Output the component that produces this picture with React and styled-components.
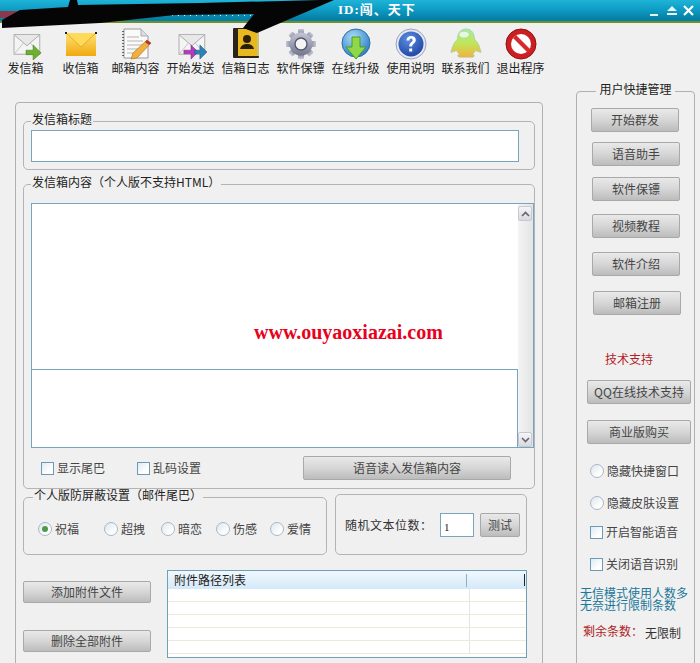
import React from "react";
import styled, { createGlobalStyle } from "styled-components";

const Global = createGlobalStyle`
  html, body { margin: 0; padding: 0; background: #f0f0f0; }
  * { box-sizing: border-box; }
`;

const Page = styled.div`
  position: relative;
  width: 700px;
  height: 663px;
  overflow: hidden;
  background: #f0f0f0;
  color: #333;
  font: 12px/14px "Noto Sans CJK SC", "Liberation Sans", sans-serif;
`;

const TitleBar = styled.header`
  position: relative;
  height: 23px;
  padding-right: 5px;
  display: flex;
  align-items: center;
  justify-content: flex-end;
  background: linear-gradient(#1fb4d8 0%, #0e9cc4 45%, #067fa6 90%);
  border-bottom: 2px solid #6f8f2a;
`;

const TitleText = styled.div`
  position: absolute;
  left: 338px;
  top: 2px;
  color: #fff;
  font: bold 13px/16px "Liberation Serif", "Noto Sans CJK SC", serif;
  letter-spacing: 1px;
`;

const Scribble = styled.svg`
  position: absolute;
  left: 0;
  top: 0;
  pointer-events: none;
`;

const Toolbar = styled.nav`
  display: flex;
  height: 59px;
  margin-left: -2px;
  padding-top: 5px;
`;

const ToolItem = styled.div`
  width: 55px;
  display: flex;
  flex-direction: column;
  align-items: center;
  color: #222;
  svg { display: block; }
`;

const ToolLabel = styled.span`
  margin-top: 1px;
  white-space: nowrap;
`;

const Body = styled.main`
  display: flex;
  align-items: flex-start;
  padding-left: 15px;
`;

const LeftPanel = styled.section`
  width: 528px;
  height: 600px;
  margin-top: 20px;
  padding: 9px 7px 0;
  border: 1px solid #b0b0b0;
  border-radius: 4px;
  flex-shrink: 0;
`;

const Group = styled.fieldset`
  margin: ${(p) => p.$top || 0}px 0 0;
  min-width: 0;
  width: ${(p) => (p.$width ? `${p.$width}px` : "auto")};
  height: ${(p) => (p.$height ? `${p.$height}px` : "auto")};
  padding: ${(p) => p.$pad || "0 15px 7px 7px"};
  border: 1px solid #b4b4b4;
  border-radius: 5px;
`;

const Legend = styled.legend`
  padding: 0 ${(p) => p.$side || 1}px 4px;
  margin-left: ${(p) => (p.$center ? "auto" : `${p.$left || 0}px`)};
  margin-right: ${(p) => (p.$center ? "auto" : "0")};
  color: #222;
  white-space: nowrap;
`;

const FieldBox = styled.div`
  height: 32px;
  background: #fff;
  border: 1px solid #78a5bd;
`;

const Editor = styled.div`
  display: flex;
  height: 245px;
  margin-top: 10px;
  background: #fff;
  border: 1px solid #78a5bd;
`;

const EditorColumn = styled.div`
  flex: 1;
  display: flex;
  flex-direction: column;
  justify-content: flex-end;
`;

const EditorFooter = styled.div`
  height: 79px;
  margin-left: -1px;
  margin-bottom: -1px;
  border: 1px solid #78a5bd;
`;

const Scrollbar = styled.div`
  width: 15px;
  display: flex;
  flex-direction: column;
  justify-content: space-between;
  padding: 2px 1px 0 0;
  background: linear-gradient(90deg, #f4f4f4, #e4e4e4);
`;

const ScrollArrow = styled.div`
  height: 15px;
  display: flex;
  align-items: center;
  justify-content: center;
  border: 1px solid #c8c8d0;
  border-radius: 2px;
  background: linear-gradient(#f6f6f8, #d8d8e0);
  color: #555;
`;

const OptionRow = styled.div`
  display: flex;
  align-items: center;
  height: 40px;
  padding: 0 23px 0 10px;
`;

const CheckItem = styled.label`
  display: flex;
  align-items: center;
  gap: 3px;
  width: ${(p) => (p.$width ? `${p.$width}px` : "auto")};
  margin-top: ${(p) => p.$top || 0}px;
  margin-left: ${(p) => p.$left || 0}px;
  color: #444;
  white-space: nowrap;
`;

const CheckBox = styled.span`
  width: 13px;
  height: 13px;
  flex-shrink: 0;
  border: 1px solid #6f9ab5;
  background: linear-gradient(135deg, #dcebf3, #fff 70%);
`;

const Radio = styled.span`
  position: relative;
  width: 14px;
  height: 14px;
  flex-shrink: 0;
  border: 1px solid #a8b8c4;
  border-radius: 50%;
  background: linear-gradient(135deg, #dde6ec, #fff 75%);
  ${(p) =>
    p.$checked &&
    `&::after {
      content: "";
      position: absolute;
      left: 3px;
      top: 3px;
      width: 6px;
      height: 6px;
      border-radius: 50%;
      background: #4f9a4a;
    }`}
`;

const SkinButton = styled.button`
  display: flex;
  align-items: center;
  justify-content: center;
  width: ${(p) => p.$width}px;
  height: ${(p) => p.$height || 24}px;
  margin: ${(p) => p.$top || 0}px 0 0 ${(p) => p.$left || 0}px;
  padding: 0;
  flex-shrink: 0;
  border: 1px solid #a9a9a9;
  border-radius: 2px;
  background: linear-gradient(#e9e9e9 0%, #d6d6d6 50%, #bcbcbc 100%);
  color: #444;
  font: inherit;
  white-space: nowrap;
`;

const SettingsRow = styled.div`
  display: flex;
  align-items: flex-start;
  gap: 8px;
  margin-top: -1px;
`;

const RadioRow = styled.div`
  display: flex;
  align-items: center;
  margin-top: 16px;
`;

const NumberRow = styled.div`
  display: flex;
  align-items: center;
  height: 100%;
  padding-left: 9px;
`;

const NumberLabel = styled.span`
  width: 95px;
  color: #333;
  letter-spacing: 0.5px;
  white-space: nowrap;
`;

const NumberField = styled.div`
  width: 34px;
  height: 24px;
  margin-right: 6px;
  padding: 6px 0 0 3px;
  background: #fff;
  border: 1px solid #78a5bd;
  color: #222;
  font: 11px/14px "Liberation Serif", serif;
`;

const AttachRow = styled.div`
  display: flex;
  margin-top: 15px;
`;

const AttachActions = styled.div`
  width: 144px;
  padding-top: 11px;
`;

const AttachList = styled.div`
  width: 360px;
  height: 88px;
  background: #fff;
  border: 1px solid #6f9fb5;
`;

const ListHeader = styled.div`
  position: relative;
  display: flex;
  align-items: center;
  height: 18px;
  padding-left: 6px;
  color: #222;
  background: linear-gradient(#f0f8fd, #d4e9f8);
`;

const ListMark = styled.span`
  position: absolute;
  right: ${(p) => p.$right}px;
  top: ${(p) => p.$top}px;
  width: 1px;
  height: ${(p) => p.$h}px;
  background: ${(p) => p.$color};
`;

const ListRow = styled.div`
  display: flex;
  height: 13px;
  border-bottom: 1px solid #ecead8;
  &:first-of-type { height: 14px; }
`;

const ListCell = styled.div`
  width: 302px;
  border-right: 1px solid #e6e6e0;
`;

const RightPanel = styled.fieldset`
  width: 119px;
  height: 620px;
  margin: 0 0 0 33px;
  padding: 8px 0 0 0;
  min-width: 0;
  flex-shrink: 0;
  display: flex;
  flex-direction: column;
  border: 1px solid #b0b0b0;
  border-radius: 4px;
`;

const SupportTitle = styled.div`
  margin: 37px 0 0 28px;
  color: #b01c24;
`;

const NoticeText = styled.div`
  margin: 16px 0 0 3px;
  color: #1a7799;
  line-height: 12px;
  white-space: nowrap;
`;

const QuotaRow = styled.div`
  display: flex;
  margin: 13px 0 0 6px;
`;

const QuotaLabel = styled.span`
  width: 62px;
  color: #b01c24;
`;

const QuotaValue = styled.span`
  margin-top: 2px;
  color: #333;
`;

const Watermark = styled.div`
  position: absolute;
  left: 254px;
  top: 320px;
  color: #e8001c;
  font: bold 20px/24px "Liberation Serif", serif;
`;

const Envelope = ({ color = "#e8e8e8" }) => (
  <g>
    <rect x="4.5" y="7.5" width="29" height="22" fill="#f4f4f4" stroke="#a5a5a5" />
    <path d="M5 8l14 12L33 8" fill={color} stroke="#a5a5a5" />
    <path d="M5 29l10-12M33 29L23 17" fill="none" stroke="#c0c0c0" />
  </g>
);

const SendMailIcon = () => (
  <svg width="32" height="32" viewBox="0 0 36 36">
    <Envelope />
    <path d="M18 25h8v-6l9 9-9 8v-6h-8z" fill="#6fae2e" stroke="#3f7d1a" strokeWidth=".6" />
  </svg>
);

const InboxIcon = () => (
  <svg width="32" height="32" viewBox="0 0 32 32">
    <defs>
      <linearGradient id="inboxFill" x1="0" y1="0" x2="0" y2="1">
        <stop offset="0" stopColor="#ffe27a" />
        <stop offset="1" stopColor="#f0a90e" />
      </linearGradient>
    </defs>
    <rect x="1" y="5" width="30" height="23" fill="url(#inboxFill)" />
    <path d="M1 5l15 14L31 5" fill="#ffd95a" stroke="#e9ac22" />
    <path d="M0 4h2v2H0zM30 4h2v2h-2z" fill="#222" />
  </svg>
);

const NotepadIcon = () => (
  <svg width="32" height="32" viewBox="0 0 32 32">
    <path d="M4 1h17l7 7v22H4z" fill="#fafafa" stroke="#9a9a9a" />
    <path d="M21 1v7h7" fill="#ddd" stroke="#aaa" />
    <path d="M7 9h12M7 13h16M7 17h16M7 21h12M7 25h8" stroke="#b5b5b5" />
    <path d="M3 3v26" stroke="#444" strokeWidth="1.6" strokeDasharray="1 2" />
    <path d="M27 12l4 3-14 15-6 1 2-6z" fill="#f0b040" stroke="#b06a10" strokeWidth=".6" />
    <path d="M27 12l4 3-2 2-4-3z" fill="#b0303a" />
  </svg>
);

const SendAllIcon = () => (
  <svg width="32" height="32" viewBox="0 0 36 36">
    <Envelope />
    <path d="M10 25h8v-6l8 8-8 8v-6h-8z" fill="#b43cbc" stroke="#7d1f86" strokeWidth=".6" />
    <path d="M22 25h6v-6l8 8-8 8v-6h-6z" fill="#2d83b8" stroke="#145a85" strokeWidth=".6" />
  </svg>
);

const AddressBookIcon = () => (
  <svg width="32" height="32" viewBox="0 0 32 32">
    <rect x="3" y="0" width="26" height="30" rx="1" fill="#2b2418" />
    <rect x="8" y="1" width="19" height="27" fill="#e8b81e" />
    <rect x="27" y="2" width="2" height="26" fill="#c9c27a" />
    <circle cx="17" cy="11" r="4" fill="#2a2008" />
    <path d="M10 21c1-4 4-5 7-5s6 1 7 5z" fill="#2a2008" />
  </svg>
);

const GearIcon = () => {
  const teeth = [0, 45, 90, 135, 180, 225, 270, 315];
  return (
    <svg width="32" height="32" viewBox="0 0 32 32">
      <defs>
        <linearGradient id="gearFill" x1="0" y1="0" x2="0" y2="1">
          <stop offset="0" stopColor="#c4c6d6" />
          <stop offset="1" stopColor="#74768e" />
        </linearGradient>
      </defs>
      {teeth.map((deg) => (
        <rect key={deg} x="13" y="1" width="6" height="7" rx="1" fill="url(#gearFill)" transform={`rotate(${deg} 16 16)`} />
      ))}
      <circle cx="16" cy="16" r="11.5" fill="url(#gearFill)" />
      <circle cx="16" cy="16" r="6" fill="#f4f4f4" stroke="#56586e" strokeWidth="1.4" />
    </svg>
  );
};

const UpdateIcon = () => (
  <svg width="32" height="32" viewBox="0 0 32 32">
    <defs>
      <radialGradient id="globeFill" cx=".4" cy=".3" r=".8">
        <stop offset="0" stopColor="#a9dcf7" />
        <stop offset="1" stopColor="#1e72c4" />
      </radialGradient>
    </defs>
    <circle cx="16" cy="15" r="14" fill="url(#globeFill)" stroke="#2d6fa8" />
    <path d="M12 9h8v10h6L16 31 6 19h6z" fill="#8ed84a" stroke="#4f9a20" />
  </svg>
);

const HelpIcon = () => (
  <svg width="32" height="32" viewBox="0 0 32 32">
    <defs>
      <radialGradient id="helpFill" cx=".4" cy=".3" r=".8">
        <stop offset="0" stopColor="#5b8fe0" />
        <stop offset="1" stopColor="#1a3fa0" />
      </radialGradient>
    </defs>
    <circle cx="16" cy="16" r="15" fill="#e6e8f2" stroke="#9aa2bc" />
    <circle cx="16" cy="16" r="12.5" fill="url(#helpFill)" />
    <path d="M11.5 12.5c0-3 2-4.5 4.7-4.5s4.6 1.5 4.6 4c0 3.5-3.6 3.4-3.6 6.5h-3c0-4.3 3.4-4.2 3.4-6.3 0-1-.7-1.6-1.6-1.6-1.1 0-1.6.8-1.6 1.9z" fill="#fff" />
    <rect x="14.2" y="20.5" width="3" height="3" fill="#fff" />
  </svg>
);

const QQIcon = () => (
  <svg width="32" height="32" viewBox="0 0 34 34">
    <defs>
      <linearGradient id="qqFill" x1="0" y1="0" x2="0" y2="1">
        <stop offset="0" stopColor="#a6e8a8" />
        <stop offset=".5" stopColor="#bfe65a" />
        <stop offset="1" stopColor="#f4b23e" />
      </linearGradient>
    </defs>
    <path d="M17 1c6 0 9 5 9 10 0 2 3 3 5 8 1 3 2 6 2 7l-6-2c-1 2-2 3-3 4 2 1 3 2 0 3H10c-3-1-2-2 0-3-1-1-2-2-3-4l-6 2c0-1 1-4 2-7 2-5 5-6 5-8C8 6 11 1 17 1z" fill="url(#qqFill)" stroke="#9bc49a" strokeWidth=".6" />
    <ellipse cx="15" cy="7" rx="5" ry="3" fill="#e4f8e4" />
  </svg>
);

const ExitIcon = () => (
  <svg width="32" height="32" viewBox="0 0 32 32">
    <circle cx="16" cy="16" r="15" fill="#cc1f22" stroke="#8e1215" />
    <circle cx="16" cy="16" r="10" fill="#fff" />
    <path d="M8 10l3-3 15 15-3 3z" fill="#d62a2c" />
  </svg>
);

const tools = [
  ["发信箱", SendMailIcon],
  ["收信箱", InboxIcon],
  ["邮箱内容", NotepadIcon],
  ["开始发送", SendAllIcon],
  ["信箱日志", AddressBookIcon],
  ["软件保镖", GearIcon],
  ["在线升级", UpdateIcon],
  ["使用说明", HelpIcon],
  ["联系我们", QQIcon],
  ["退出程序", ExitIcon],
];

const tailOptions = [
  ["祝福", 66, true],
  ["超拽", 57],
  ["暗恋", 55],
  ["伤感", 54],
  ["爱情", 50],
];

const WindowControls = () => (
  <svg width="46" height="14" viewBox="0 0 46 14">
    <path d="M1 11h8" stroke="#dff3f8" strokeWidth="2" />
    <path d="M18 7l5-5 5 5zM18 9h10v2H18z" fill="#e8f6fa" />
    <path d="M35 2l9 9M44 2l-9 9" stroke="#fff" strokeWidth="2.2" />
  </svg>
);

const Chevron = ({ up }) => (
  <svg width="9" height="6" viewBox="0 0 9 6">
    <path d={up ? "M1 5l3.5-3.5L8 5" : "M1 1l3.5 3.5L8 1"} fill="none" stroke="#666" strokeWidth="1.6" />
  </svg>
);

export default function App() {
  return (
    <Page>
      <Global />
      <TitleBar>
        <TitleText>ID:闯、天下</TitleText>
        <WindowControls />
      </TitleBar>
      <Toolbar>
        {tools.map(([label, Icon]) => (
          <ToolItem key={label}>
            <Icon />
            <ToolLabel>{label}</ToolLabel>
          </ToolItem>
        ))}
      </Toolbar>
      <Body>
        <LeftPanel>
          <Group>
            <Legend>发信箱标题</Legend>
            <FieldBox />
          </Group>
          <Group $top={5} $pad="0 0 0 7px">
            <Legend>发信箱内容（个人版不支持HTML）</Legend>
            <Editor>
              <EditorColumn>
                <EditorFooter />
              </EditorColumn>
              <Scrollbar>
                <ScrollArrow><Chevron up /></ScrollArrow>
                <ScrollArrow><Chevron /></ScrollArrow>
              </Scrollbar>
            </Editor>
            <OptionRow>
              <CheckItem $width={96}><CheckBox />显示尾巴</CheckItem>
              <CheckItem $width={166}><CheckBox />乱码设置</CheckItem>
              <SkinButton $width={208}>语音读入发信箱内容</SkinButton>
            </OptionRow>
          </Group>
          <SettingsRow>
            <Group $width={304} $height={67} $pad="0 0 0 14px">
              <Legend $left={-5}>个人版防屏蔽设置（邮件尾巴）</Legend>
              <RadioRow>
                {tailOptions.map(([label, width, checked]) => (
                  <CheckItem key={label} $width={width}>
                    <Radio $checked={checked} />
                    {label}
                  </CheckItem>
                ))}
              </RadioRow>
            </Group>
            <Group as="div" $width={192} $height={61} $top={6} $pad="0">
              <NumberRow>
                <NumberLabel>随机文本位数：</NumberLabel>
                <NumberField>1</NumberField>
                <SkinButton $width={40}>测试</SkinButton>
              </NumberRow>
            </Group>
          </SettingsRow>
          <AttachRow>
            <AttachActions>
              <SkinButton $width={128} $height={22}>添加附件文件</SkinButton>
              <SkinButton $width={128} $height={22} $top={27}>删除全部附件</SkinButton>
            </AttachActions>
            <AttachList>
              <ListHeader>
                附件路径列表
                <ListMark $right={59} $top={3} $h={13} $color="#8fb0c4" />
                <ListMark $right={1} $top={3} $h={12} $color="#222" />
              </ListHeader>
              {[0, 1, 2, 3, 4].map((row) => (
                <ListRow key={row}><ListCell /></ListRow>
              ))}
            </AttachList>
          </AttachRow>
        </LeftPanel>
        <RightPanel>
          <Legend $center $side={3}>用户快捷管理</Legend>
          <SkinButton $width={88} $left={14}>开始群发</SkinButton>
          <SkinButton $width={88} $left={15} $top={10}>语音助手</SkinButton>
          <SkinButton $width={88} $left={15} $top={11}>软件保镖</SkinButton>
          <SkinButton $width={88} $left={15} $top={13}>视频教程</SkinButton>
          <SkinButton $width={88} $left={15} $top={14}>软件介绍</SkinButton>
          <SkinButton $width={88} $left={16} $top={15}>邮箱注册</SkinButton>
          <SupportTitle>技术支持</SupportTitle>
          <SkinButton $width={104} $left={10} $top={14}>QQ在线技术支持</SkinButton>
          <SkinButton $width={104} $left={10} $top={16}>商业版购买</SkinButton>
          <CheckItem $left={13} $top={20}><Radio />隐藏快捷窗口</CheckItem>
          <CheckItem $left={13} $top={18}><Radio />隐藏皮肤设置</CheckItem>
          <CheckItem $left={13} $top={15}><CheckBox />开启智能语音</CheckItem>
          <CheckItem $left={13} $top={18}><CheckBox />关闭语音识别</CheckItem>
          <NoticeText>无信模式使用人数多<br />无奈进行限制条数</NoticeText>
          <QuotaRow>
            <QuotaLabel>剩余条数：</QuotaLabel>
            <QuotaValue>无限制</QuotaValue>
          </QuotaRow>
        </RightPanel>
      </Body>
      <Watermark>www.ouyaoxiazai.com</Watermark>
      <Scribble width="345" height="34" viewBox="0 0 345 34">
        <rect x="0" y="11" width="18" height="7" fill="#8a3a4a" />
        <path d="M172 15.5h100" stroke="#e8f6fa" strokeDasharray="1 5" />
        <path d="M2 20L20 10 68 7 70 0h7l1 5 122-2L320 0h14L257 33 243 28 254 14 175 15 100 23 2 28z" fill="#050505" />
      </Scribble>
    </Page>
  );
}
